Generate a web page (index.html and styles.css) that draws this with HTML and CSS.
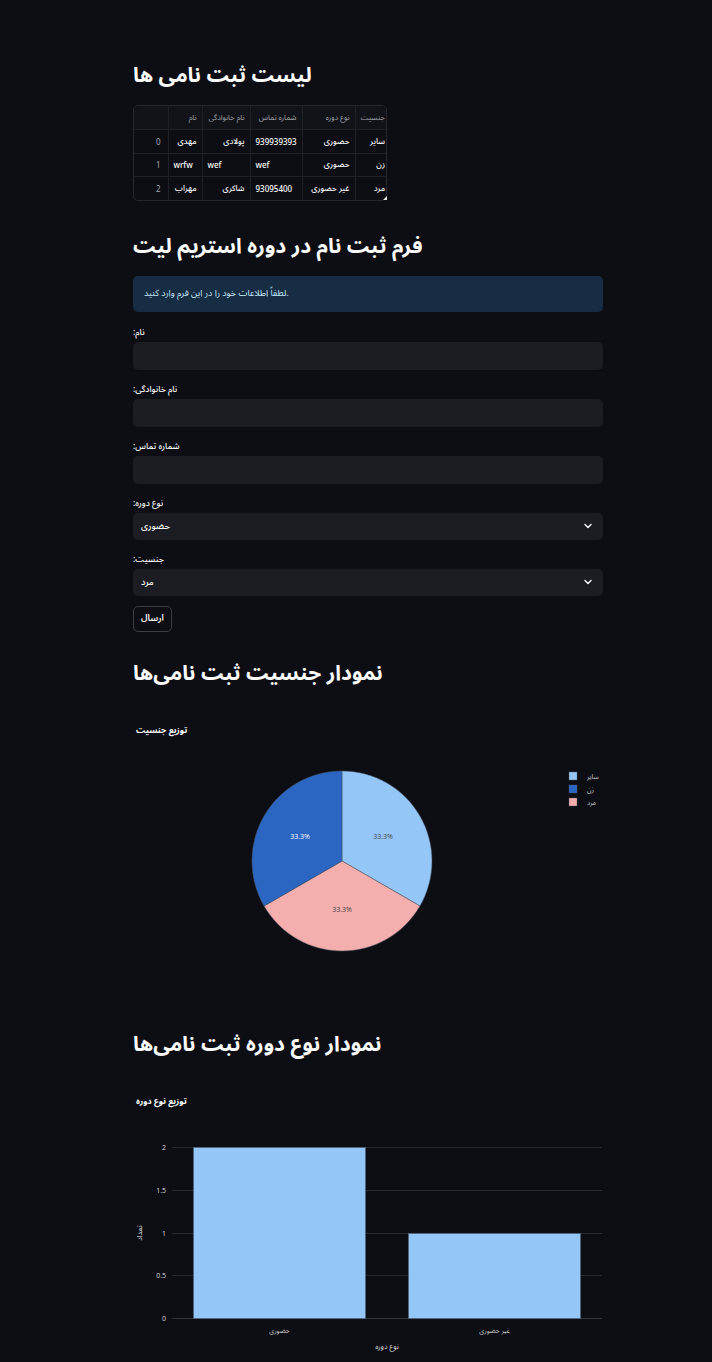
FILE: index.html
```html
<!DOCTYPE html>
<html lang="fa">
<head>
<meta charset="utf-8">
<link rel="stylesheet" href="styles.css">
</head>
<body>
<main class="main">
  <h1 class="title">لیست ثبت نامی ها</h1>
  <div class="grid-wrap">
    <div class="grid-clip">
      <table class="grid">
        <colgroup>
          <col class="c0"><col class="c1"><col class="c2"><col class="c3"><col class="c4"><col class="c5">
        </colgroup>
        <thead>
          <tr><th></th><th dir="auto">نام</th><th dir="auto">نام خانوادگی</th><th dir="auto">شماره تماس</th><th dir="auto">نوع دوره</th><th dir="auto">جنسیت</th></tr>
        </thead>
        <tbody>
          <tr><td class="idx">0</td><td dir="auto">مهدی</td><td dir="auto">پولادی</td><td dir="auto">939939393</td><td dir="auto">حضوری</td><td dir="auto">سایر</td></tr>
          <tr><td class="idx">1</td><td dir="auto">wrfw</td><td dir="auto">wef</td><td dir="auto">wef</td><td dir="auto">حضوری</td><td dir="auto">زن</td></tr>
          <tr><td class="idx">2</td><td dir="auto">مهراب</td><td dir="auto">شاکری</td><td dir="auto">93095400</td><td dir="auto">غیر حضوری</td><td dir="auto">مرد</td></tr>
        </tbody>
      </table>
    </div>
    <span class="resize"></span>
  </div>

  <h1 class="title t2">فرم ثبت نام در دوره استریم لیت</h1>
  <div class="info">لطفاً اطلاعات خود را در این فرم وارد کنید.</div>

  <div class="form">
    <div class="field">
      <label class="lbl">:نام</label>
      <div class="input"></div>
    </div>
    <div class="field">
      <label class="lbl">:نام خانوادگی</label>
      <div class="input"></div>
    </div>
    <div class="field">
      <label class="lbl">:شماره تماس</label>
      <div class="input"></div>
    </div>
    <div class="field">
      <label class="lbl">:نوع دوره</label>
      <div class="input select"><span class="val">حضوری</span>
        <svg class="chev" width="8" height="6" viewBox="0 0 8 6"><polyline points="1,1.5 4,4.5 7,1.5" fill="none" stroke="#fafafa" stroke-width="1.4" stroke-linecap="round" stroke-linejoin="round"/></svg>
      </div>
    </div>
    <div class="field">
      <label class="lbl">:جنسیت</label>
      <div class="input select"><span class="val">مرد</span>
        <svg class="chev" width="8" height="6" viewBox="0 0 8 6"><polyline points="1,1.5 4,4.5 7,1.5" fill="none" stroke="#fafafa" stroke-width="1.4" stroke-linecap="round" stroke-linejoin="round"/></svg>
      </div>
    </div>
    <div class="btn-row"><button class="btn">ارسال</button></div>
  </div>

  <h1 class="title t3">نمودار جنسیت ثبت نامی‌ها</h1>
  <svg class="chart pie" width="470" height="290" viewBox="0 0 470 290">
    <text x="3" y="31" class="ctitle">توزیع جنسیت</text>
    <path d="M209,159 L209,69 A90,90 0 0 1 286.94,204 Z" fill="#94c7f8" stroke="#4c5566" stroke-width="0.5"/>
    <path d="M209,159 L286.94,204 A90,90 0 0 1 131.06,204 Z" fill="#f5aeae" stroke="#4c5566" stroke-width="0.5"/>
    <path d="M209,159 L131.06,204 A90,90 0 0 1 209,69 Z" fill="#2a66c2" stroke="#4c5566" stroke-width="0.5"/>
    <text x="250" y="137" class="plab" fill="#444">33.3%</text>
    <text x="167" y="137" class="plab" fill="#ffffff">33.3%</text>
    <text x="209" y="210" class="plab" fill="#444">33.3%</text>
    <rect x="436" y="70" width="8" height="8" fill="#94c7f8" stroke="#4c5566" stroke-width="0.4"/>
    <rect x="436" y="83" width="8" height="8" fill="#2a66c2" stroke="#4c5566" stroke-width="0.4"/>
    <rect x="436" y="96" width="8" height="8" fill="#f5aeae" stroke="#4c5566" stroke-width="0.4"/>
    <text x="454" y="76.5" class="leg">سایر</text>
    <text x="454" y="89.5" class="leg">زن</text>
    <text x="454" y="102.5" class="leg">مرد</text>
  </svg>

  <h1 class="title t4">نمودار نوع دوره ثبت نامی‌ها</h1>
  <svg class="chart bar" width="470" height="290" viewBox="0 0 470 290">
    <text x="3" y="29" class="ctitle">توزیع نوع دوره</text>
    <g stroke="#262a31" stroke-width="1">
      <line x1="39" y1="72.5" x2="469" y2="72.5"/>
      <line x1="39" y1="115.5" x2="469" y2="115.5"/>
      <line x1="39" y1="158.5" x2="469" y2="158.5"/>
      <line x1="39" y1="200.5" x2="469" y2="200.5"/>
    </g>
    <line x1="39" y1="243.5" x2="469" y2="243.5" stroke="#30343c" stroke-width="1"/>
    <rect x="60.5" y="72.5" width="172" height="171" fill="#94c7f8" stroke="#50627a" stroke-width="0.8"/>
    <rect x="275.5" y="158.5" width="172" height="85" fill="#94c7f8" stroke="#50627a" stroke-width="0.8"/>
    <g class="ytick">
      <text x="33" y="75">2</text>
      <text x="33" y="118">1.5</text>
      <text x="33" y="161">1</text>
      <text x="33" y="203">0.5</text>
      <text x="33" y="246">0</text>
    </g>
    <text x="146.5" y="258" class="xtick">حضوری</text>
    <text x="361.5" y="258" class="xtick">غیر حضوری</text>
    <text x="254" y="274" class="xtitle">نوع دوره</text>
    <text x="0" y="0" class="ytitle" transform="translate(9,158) rotate(-90)">تعداد</text>
  </svg>
</main>
</body>
</html>
```

FILE: styles.css
```css
html, body {
  margin: 0;
  padding: 0;
  background: #0c0e13;
}
body {
  font-family: "Noto Sans", "Noto Sans Arabic", "DejaVu Sans", sans-serif;
  color: #fafafa;
}
.main {
  padding: 57px 109px 0 133px;
  width: 470px;
}
.title {
  margin: 0;
  font-family: "Noto Sans Arabic", "Noto Naskh Arabic", "DejaVu Sans", sans-serif;
  font-stretch: condensed;
  font-weight: 700;
  font-size: 21px;
  line-height: 36px;
  color: #fafafa;
}
.grid-wrap {
  position: relative;
  margin-top: 12px;
  width: 254px;
}
.grid-clip {
  width: 252px;
  overflow: hidden;
  border: 1px solid #26282e;
  border-radius: 5px;
}
.grid {
  table-layout: fixed;
  border-collapse: collapse;
  width: 254px;
  font-size: 8px;
}
.c0 { width: 34px; }
.c1 { width: 34px; }
.c2 { width: 48px; }
.c3 { width: 52px; }
.c4 { width: 53px; }
.c5 { width: 33px; }
.grid th, .grid td {
  padding: 0 5px;
  text-align: start;
  white-space: nowrap;
  overflow: hidden;
  border-right: 1px solid #1f2126;
  border-bottom: 1px solid #1f2126;
}
.grid th:last-child, .grid td:last-child { border-right: none; padding-right: 3px; }
.grid th {
  height: 23px;
  background: #111318;
  color: #a3a6ad;
  font-weight: 400;
  font-size: 7.5px;
}
.grid td {
  height: 22.5px;
  color: #fafafa;
  font-weight: 500;
}
.grid tbody tr:last-child td { border-bottom: none; }
.grid td.idx {
  text-align: right;
  color: #a3a6ad;
  padding-right: 7px;
  font-weight: 400;
}
.resize {
  position: absolute;
  right: 0;
  bottom: 1px;
  width: 0;
  height: 0;
  border-left: 4px solid transparent;
  border-bottom: 4px solid #e8e8e8;
}
.t2 { margin-top: 27px; }
.info {
  margin-top: 12px;
  background: #172d43;
  color: #c7ebff;
  border-radius: 5px;
  height: 36px;
  padding: 0 11px;
  display: flex;
  align-items: center;
  font-family: "Noto Sans Arabic", "DejaVu Sans", sans-serif;
  font-size: 9px;
}
.form {
  display: flex;
  flex-direction: column;
  gap: 12px;
  margin-top: 13px;
}
.field {
  display: flex;
  flex-direction: column;
  gap: 3px;
}
.lbl {
  font-family: "Noto Sans Arabic", "DejaVu Sans", sans-serif;
  font-size: 8.5px;
  font-weight: 500;
  line-height: 14px;
  height: 14px;
  color: #fafafa;
}
.input {
  height: 28px;
  background: #1c1d22;
  border-radius: 5px;
}
.select {
  display: flex;
  align-items: center;
  justify-content: space-between;
  padding: 0 11px 0 8px;
  height: 27px;
}
.val {
  font-family: "Noto Sans Arabic", "DejaVu Sans", sans-serif;
  font-size: 9px;
  font-weight: 500;
  color: #fafafa;
}
.chev { display: block; }
.btn-row { margin-top: -2px; }
.btn {
  width: 39px;
  height: 26px;
  background: #0c0e13;
  border: 1px solid #3a3d45;
  border-radius: 5px;
  color: #fafafa;
  font-family: "Noto Sans Arabic", "DejaVu Sans", sans-serif;
  font-size: 9px;
  font-weight: 600;
  padding: 0;
  display: flex;
  align-items: center;
  justify-content: center;
}
.t3 { margin-top: 23px; }
.chart {
  display: block;
}
.pie { margin-top: 11px; }
.ctitle {
  font-family: "Noto Sans Arabic", "DejaVu Sans", sans-serif;
  font-size: 8.5px;
  font-weight: 700;
  fill: #fafafa;
}
.plab {
  font-family: "Open Sans", "DejaVu Sans", sans-serif;
  font-size: 7px;
  text-anchor: middle;
}
.leg {
  font-family: "Noto Sans Arabic", "DejaVu Sans", sans-serif;
  font-size: 6.5px;
  fill: #d8d8d8;
}
.t4 { margin-top: 34px; }
.bar { margin-top: 13px; }
.ytick text {
  font-family: "Open Sans", "DejaVu Sans", sans-serif;
  font-size: 7px;
  fill: #d8d8d8;
  text-anchor: end;
}
.xtick, .xtitle, .ytitle {
  font-family: "Noto Sans Arabic", "DejaVu Sans", sans-serif;
  font-size: 6.5px;
  fill: #d8d8d8;
  text-anchor: middle;
}
.xtitle, .ytitle { font-size: 7.5px; }
```
